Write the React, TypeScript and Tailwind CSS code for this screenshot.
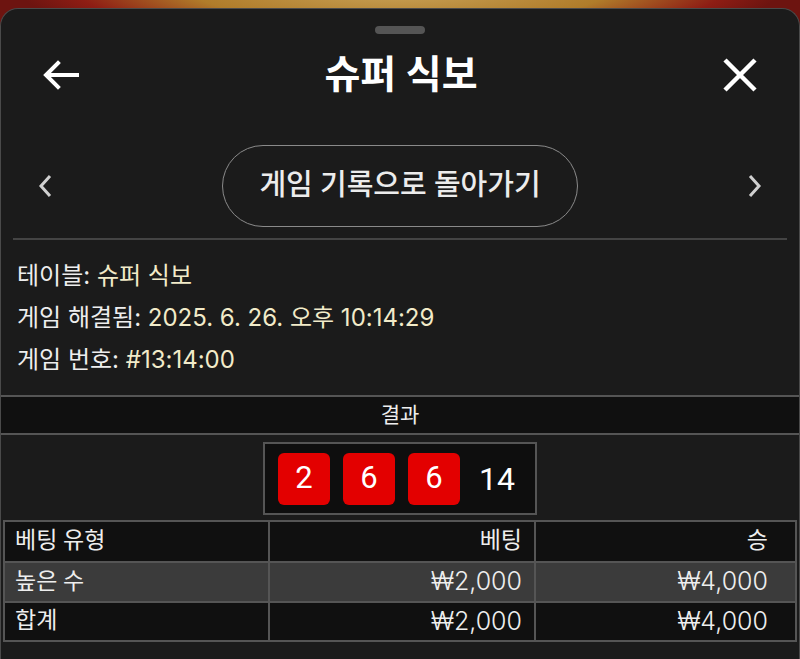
import React from "react";

const font = { fontFamily: 'Roboto, "Noto Sans CJK KR", "Noto Sans", sans-serif' };
const wide = { fontFamily: 'Inter, "Noto Sans CJK KR", "Noto Sans", sans-serif' };

const rows = [
  { type: "높은 수", bet: "₩2,000", win: "₩4,000", hl: true },
  { type: "합계", bet: "₩2,000", win: "₩4,000", hl: false },
];

const dice = [2, 6, 6];

export default function App() {
  return (
    <div
      className="h-[659px] overflow-hidden bg-[radial-gradient(ellipse_380px_60px_at_50%_-10px,#c9a45a_0%,#b07c2a_55%,#8e1d14_85%,#6d1410_100%)]"
      style={font}
    >
      <div className="mt-[8px] h-[651px] rounded-t-[18px] border border-b-0 border-[#4a4a4a] bg-[#1b1b1b] text-[#eeeeee]">
        {/* handle */}
        <div className="mx-auto mt-[17px] h-2 w-[50px] rounded-full bg-[#555]" />

        {/* header */}
        <div className="mt-[9px] flex h-[64px] items-center justify-between px-[40px]">
          <svg width="40" height="34" viewBox="0 0 40 34" fill="none" stroke="white" strokeWidth="4" strokeLinecap="square">
            <path d="M36 17H6" />
            <path d="M17 5L5 17l12 12" />
          </svg>
          <h1 className="text-[39px] font-bold leading-none text-white">슈퍼 식보</h1>
          <svg width="38" height="38" viewBox="0 0 38 38" fill="none" stroke="white" strokeWidth="4.5">
            <path d="M4 4l30 30M34 4L4 34" />
          </svg>
        </div>

        {/* nav */}
        <div className="mt-[38px] flex items-center justify-between px-[36px]">
          <svg width="16" height="26" viewBox="0 0 16 26" fill="none" stroke="#d0d0d0" strokeWidth="3">
            <path d="M13 3L4 13l9 10" />
          </svg>
          <button className="flex h-[82px] w-[356px] items-center justify-center rounded-full border border-[#8a8a8a] text-[29px] font-medium text-[#ececec]">
            게임 기록으로 돌아가기
          </button>
          <svg width="16" height="26" viewBox="0 0 16 26" fill="none" stroke="#d0d0d0" strokeWidth="3">
            <path d="M3 3l9 10-9 10" />
          </svg>
        </div>

        <div className="mx-3 mt-[11px] h-[2px] bg-[#444]" />

        {/* info */}
        <div className="px-4 pt-[15px] text-[24px] leading-[42px]" style={wide}>
          <p>
            테이블: <span className="text-[#f2ebc9]">슈퍼 식보</span>
          </p>
          <p>
            게임 해결됨: <span className="text-[#f2ebc9]">2025. 6. 26. 오후 10:14:29</span>
          </p>
          <p>
            게임 번호: <span className="text-[#f2ebc9]">#13:14:00</span>
          </p>
        </div>

        {/* result */}
        <div className="mt-[14px] border-y-2 border-[#555] bg-[#101010] text-center text-[21px] leading-[36px]">
          결과
        </div>
        <div className="flex justify-center pt-[7px] pb-[5px]">
          <div className="flex h-[73px] w-[274px] items-center gap-[13px] border-2 border-[#555] bg-[#0e0e0e] px-[13px]">
            {dice.map((d, i) => (
              <div
                key={i}
                className="flex h-[52px] w-[52px] items-center justify-center rounded-[6px] bg-[#e30000] text-[31px] text-white"
              >
                {d}
              </div>
            ))}
            <span className="ml-[6px] text-[32px] text-white">14</span>
          </div>
        </div>

        {/* bets */}
        <div className="mx-[2px]">
          <table className="w-full border-collapse text-[23px]">
            <thead>
              <tr className="h-[41px] bg-[#101010]">
                <th className="w-[265px] border-2 border-[#555] px-[10px] text-left font-normal">베팅 유형</th>
                <th className="w-[266px] border-2 border-[#555] px-3 text-right font-normal">베팅</th>
                <th className="border-2 border-[#555] pr-[27px] text-right font-normal">승</th>
              </tr>
            </thead>
            <tbody>
              {rows.map((r) => (
                <tr key={r.type} className={r.hl ? "h-[37px] bg-[#3b3b3b]" : "h-[37px] bg-[#101010]"}>
                  <td className="border-2 border-[#555] px-[10px]">{r.type}</td>
                  <td className="border-2 border-[#555] px-3 text-right text-[25px] font-light" style={wide}>
                    {r.bet}
                  </td>
                  <td className="border-2 border-[#555] pr-[27px] text-right text-[25px] font-light" style={wide}>
                    {r.win}
                  </td>
                </tr>
              ))}
            </tbody>
          </table>
        </div>
      </div>
    </div>
  );
}
